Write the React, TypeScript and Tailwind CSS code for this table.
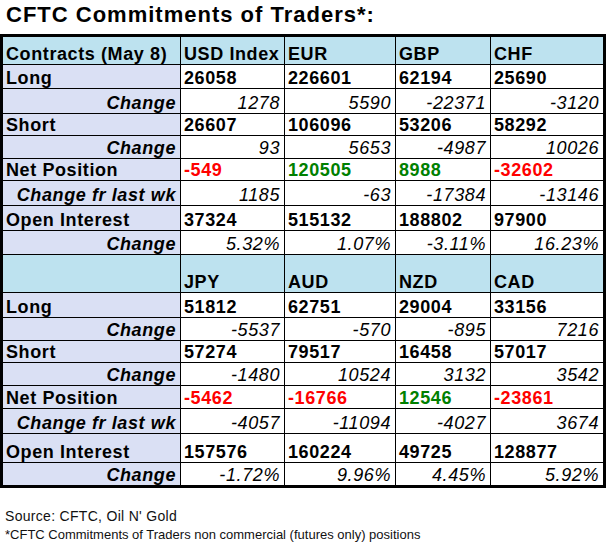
type Kind = "main" | "change" | "net";

type Row = { label: string; kind: Kind; values: string[] };

type Block = { head: string; cols: string[]; rows: Row[] };

const blocks: Block[] = [
  {
    head: "Contracts (May 8)",
    cols: ["USD Index", "EUR", "GBP", "CHF"],
    rows: [
      { label: "Long", kind: "main", values: ["26058", "226601", "62194", "25690"] },
      { label: "Change", kind: "change", values: ["1278", "5590", "-22371", "-3120"] },
      { label: "Short", kind: "main", values: ["26607", "106096", "53206", "58292"] },
      { label: "Change", kind: "change", values: ["93", "5653", "-4987", "10026"] },
      { label: "Net Position", kind: "net", values: ["-549", "120505", "8988", "-32602"] },
      { label: "Change fr last wk", kind: "change", values: ["1185", "-63", "-17384", "-13146"] },
      { label: "Open Interest", kind: "main", values: ["37324", "515132", "188802", "97900"] },
      { label: "Change", kind: "change", values: ["5.32%", "1.07%", "-3.11%", "16.23%"] },
    ],
  },
  {
    head: "",
    cols: ["JPY", "AUD", "NZD", "CAD"],
    rows: [
      { label: "Long", kind: "main", values: ["51812", "62751", "29004", "33156"] },
      { label: "Change", kind: "change", values: ["-5537", "-570", "-895", "7216"] },
      { label: "Short", kind: "main", values: ["57274", "79517", "16458", "57017"] },
      { label: "Change", kind: "change", values: ["-1480", "10524", "3132", "3542"] },
      { label: "Net Position", kind: "net", values: ["-5462", "-16766", "12546", "-23861"] },
      { label: "Change fr last wk", kind: "change", values: ["-4057", "-11094", "-4027", "3674"] },
      { label: "Open Interest", kind: "main", values: ["157576", "160224", "49725", "128877"] },
      { label: "Change", kind: "change", values: ["-1.72%", "9.96%", "4.45%", "5.92%"] },
    ],
  },
];

const cell = "flex items-end pb-px leading-[18px] text-[18px] tracking-[0.6px] whitespace-nowrap overflow-hidden";

function valueClass(row: Row, v: string) {
  if (row.kind === "change") return "justify-end pr-[4px] italic bg-white text-black";
  if (row.kind === "net")
    return `pl-[3px] font-bold bg-white ${v.startsWith("-") ? "text-[#ff0000]" : "text-[#008000]"}`;
  return "pl-[3px] font-bold bg-white text-black";
}

export default function App() {
  return (
    <div
      className="w-[611px] h-[551px] bg-white text-black overflow-hidden"
      style={{ fontFamily: '"Liberation Sans", Arial, sans-serif' }}
    >
      <h1 className="pl-[6px] pt-[1.5px] h-[34px] text-[22px] leading-[26px] font-bold tracking-[1px]">
        CFTC Commitments of Traders*:
      </h1>

      <div className="w-[606px] border-[3px] border-black bg-black">
        <div className="grid grid-cols-[177px_103px_110px_94px_112px] grid-rows-[27px_23px_24px_21px_22px_21px_24px_24px_23px_37px_24px_22px_21px_22px_22px_24px_28px_22px] gap-px">
          {blocks.map((b, bi) => (
            <div key={bi} className="contents">
              <div className={`${cell} pl-[3px] font-bold bg-[#bde2ef]`}>{b.head}</div>
              {b.cols.map((c) => (
                <div key={c} className={`${cell} pl-[3px] font-bold bg-[#bde2ef]`}>
                  {c}
                </div>
              ))}
              {b.rows.map((r, ri) => (
                <div key={ri} className="contents">
                  <div
                    className={`${cell} font-bold bg-[#dae0f4] ${
                      r.kind === "change" ? "justify-end pr-[4px] italic" : "pl-[3px]"
                    }`}
                  >
                    {r.label}
                  </div>
                  {r.values.map((v, vi) => (
                    <div key={vi} className={`${cell} ${valueClass(r, v)}`}>
                      {v}
                    </div>
                  ))}
                </div>
              ))}
            </div>
          ))}
        </div>
      </div>

      <p className="mt-[20px] pl-[5px] text-[14px] leading-[16px] tracking-[0.3px] text-[#111]">
        Source: CFTC, Oil N' Gold
      </p>
      <p className="mt-[2.5px] pl-[5px] text-[13px] leading-[16px] text-[#111]">
        *CFTC Commitments of Traders non commercial (futures only) positions
      </p>
    </div>
  );
}
